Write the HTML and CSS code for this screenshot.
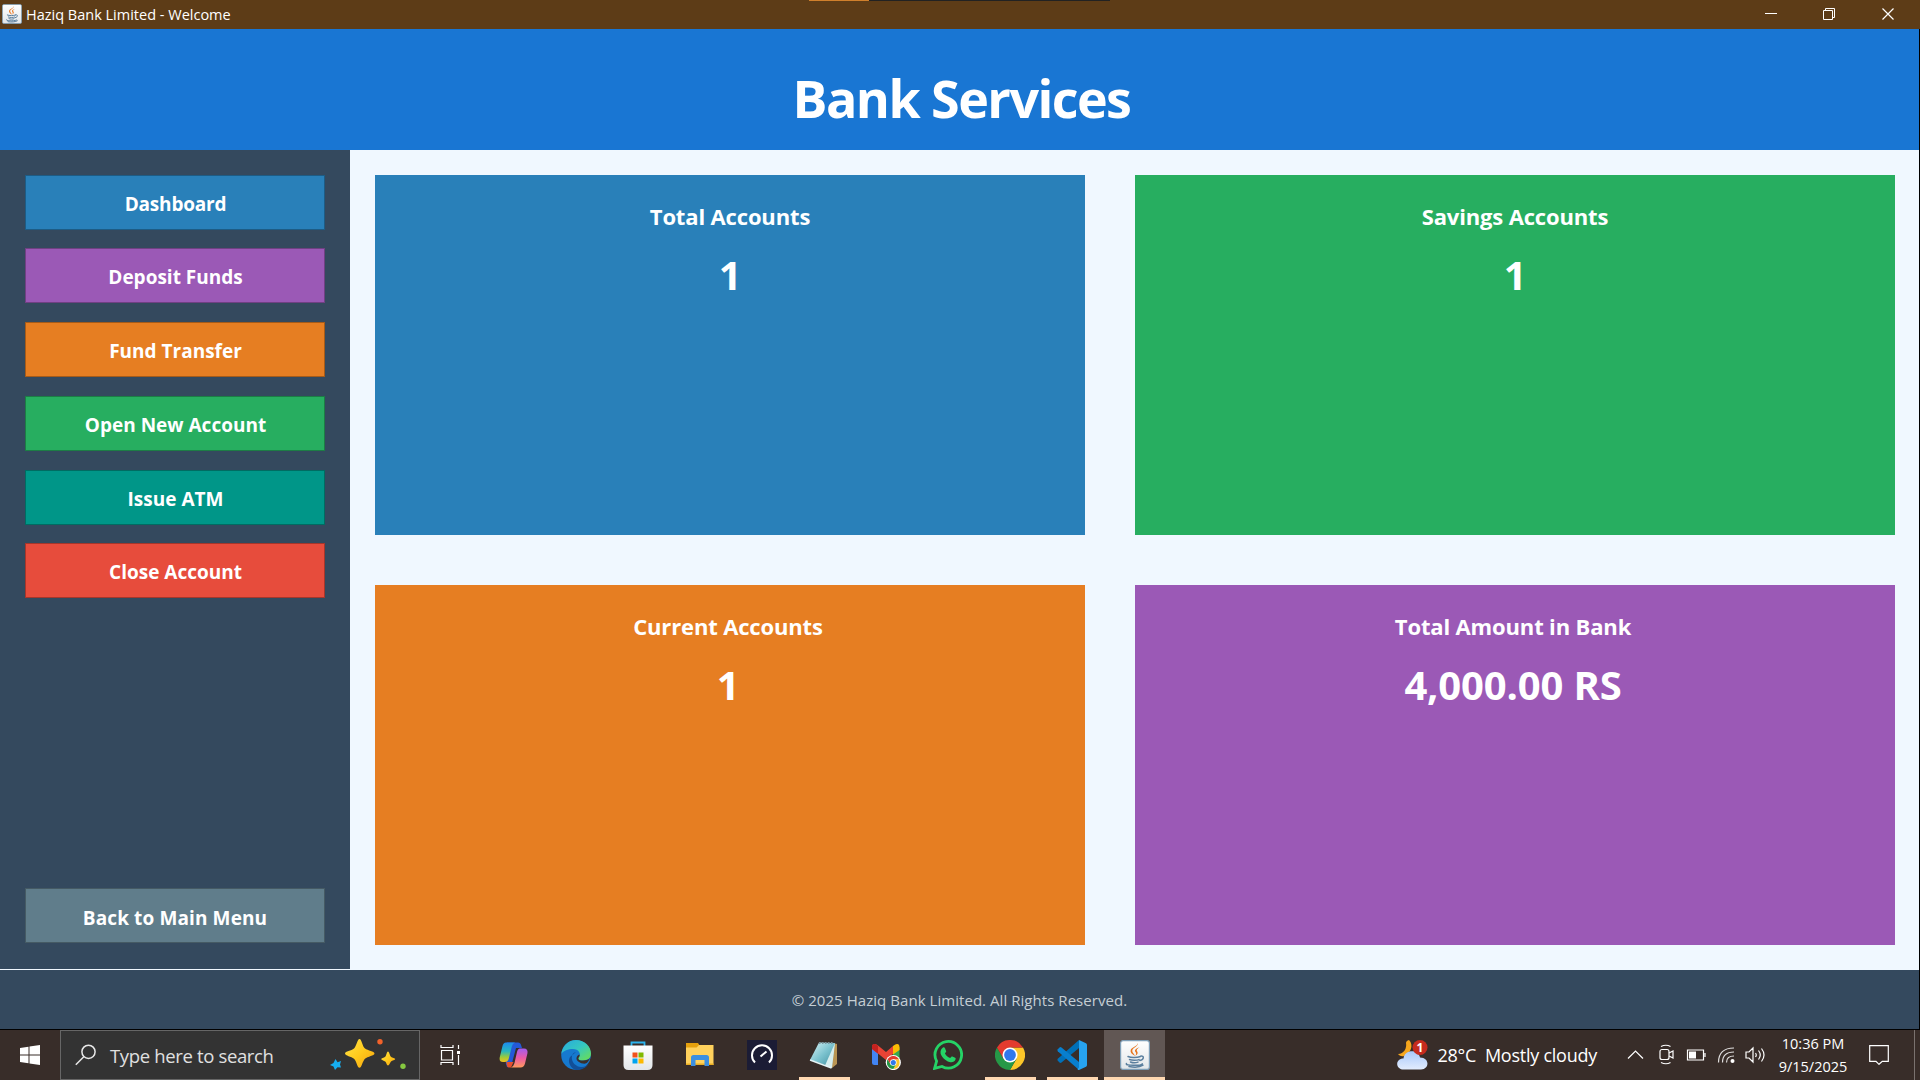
FILE: index.html
```html
<!DOCTYPE html>
<html lang="en">
<head>
<meta charset="utf-8">
<title>Haziq Bank Limited - Welcome</title>
<link rel="stylesheet" href="styles.css">
</head>
<body>
<svg class="defs" width="0" height="0" aria-hidden="true">
  <defs>
    <linearGradient id="tile" x1="0" y1="0" x2="0" y2="1"><stop offset="0" stop-color="#fff"/><stop offset="1" stop-color="#e2e6e9"/></linearGradient>
    <linearGradient id="gold" x1="0" y1="0" x2="1" y2="1"><stop offset="0" stop-color="#ffe34a"/><stop offset=".5" stop-color="#ffca1c"/><stop offset="1" stop-color="#f3a010"/></linearGradient>
    <linearGradient id="copA" x1="0" y1="0" x2="0" y2="1"><stop offset="0" stop-color="#1d8bee"/><stop offset=".45" stop-color="#27b7c0"/><stop offset=".75" stop-color="#9ccb3a"/><stop offset="1" stop-color="#f2c11c"/></linearGradient>
    <linearGradient id="copB" x1="0" y1="0" x2="0" y2="1"><stop offset="0" stop-color="#a25cf0"/><stop offset=".5" stop-color="#ec5aa6"/><stop offset="1" stop-color="#ff9a5c"/></linearGradient>
    <linearGradient id="edgeA" x1="0" y1="0" x2="1" y2="1"><stop offset="0" stop-color="#28a9e0"/><stop offset=".5" stop-color="#35c8c0"/><stop offset="1" stop-color="#6fe04a"/></linearGradient>
    <linearGradient id="cloud" x1="0" y1="0" x2="0" y2="1"><stop offset="0" stop-color="#a9c9fb"/><stop offset="1" stop-color="#e2ecfd"/></linearGradient>
    <linearGradient id="note" x1="0" y1="0" x2="1" y2="1"><stop offset="0" stop-color="#d9f3f6"/><stop offset=".5" stop-color="#7cc3cf"/><stop offset="1" stop-color="#3b8b9b"/></linearGradient>
    <symbol id="java" viewBox="0 0 30 30">
      <rect x=".6" y=".6" width="28.8" height="28.8" rx="2.5" fill="url(#tile)" stroke="#7f9fb8" stroke-width="1.2"/>
      <path d="M17.8 3c.9 3.5-6.200 5-5.500 8.200.2 1.600 2.200 3 2.700 4.800-3.200-1.800-5-3.600-4.300-5.900C11.500 7.200 17.300 6.500 17.800 3z" fill="#e6741e"/>
      <path d="M19.500 7.300c-4 1.300-5.500 3-3.800 5 .8 1.100.5 2.300-.6 3.700 3-1.700 3-3.200 1.900-4.700-.9-1.300.3-2.600 2.500-4z" fill="#e6741e"/>
      <g fill="none" stroke="#5b7f9e" stroke-width="1.500" stroke-linecap="round"><path d="M8 16.500c3 1.300 9 1.200 12.500 0M9.500 19.500c2.500 1 7.500 1 9.500.1M10.500 22c2 .9 5.500.9 7.500.1M20.500 16.200c4-.9 3.700 3.600-.6 4.300M6.500 23.600c-2 2.200 14.500 2.400 15.800.2M9 26.600c5 .8 11.500.4 14-1.400"/></g>
    </symbol>
    <symbol id="chrome" viewBox="0 0 30 30">
      <path d="M15 7.500H28A15 15 0 0 1 15 30L21.500 18.800z" fill="#fcc629"/>
      <path d="M8.500 18.800 2 7.500A15 15 0 0 0 15 30L21.500 18.800z" fill="#269847"/>
      <path d="M15 7.500H28A15 15 0 0 0 2 7.500L8.500 18.800z" fill="#e33b2e"/>
      <circle cx="15" cy="15" r="7.500" fill="#fff"/><circle cx="15" cy="15" r="5.900" fill="#3078ec"/>
    </symbol>
  </defs>
</svg>

<div class="desktop">
  <header class="titlebar">
    <svg class="titlebar-icon" width="20" height="20"><use href="#java"/></svg>
    <span class="titlebar-text">Haziq Bank Limited - Welcome</span>
    <div class="capture-strip"></div>
    <svg class="window-controls" width="174" height="29" fill="none" stroke="#fff"><path d="M19 13.500h12M77.500 10.500h9v9h-9zM79.500 10V8.500h9v9H87"/><path d="m136.500 8.500 11 11m0-11-11 11" stroke-width="1.200"/></svg>
  </header>

  <div class="app">
    <div class="banner"><h1>Bank Services</h1></div>
    <div class="body">
      <nav class="sidebar">
        <button class="nav-button blue first">Dashboard</button>
        <button class="nav-button purple">Deposit Funds</button>
        <button class="nav-button orange">Fund Transfer</button>
        <button class="nav-button green">Open New Account</button>
        <button class="nav-button teal">Issue ATM</button>
        <button class="nav-button red last">Close Account</button>
        <button class="nav-button slate back">Back to Main Menu</button>
      </nav>
      <main class="cards">
        <section class="card blue"><h2>Total Accounts</h2><p>1</p></section>
        <section class="card green"><h2>Savings Accounts</h2><p>1</p></section>
        <section class="card orange lower"><h2>Current Accounts</h2><p>1</p></section>
        <section class="card purple lower"><h2>Total Amount in Bank</h2><p>4,000.00 RS</p></section>
      </main>
    </div>
    <footer class="footer">© 2025 Haziq Bank Limited. All Rights Reserved.</footer>
  </div>

  <div class="taskbar">
    <div class="start"><svg width="20" height="20" fill="#fff"><path d="M0 3l8.500-1.300v7.800H0zM9.500 1.500 20 0v9.500H9.500zM0 10.500h8.500v7.800L0 17zM9.500 10.500H20V20L9.500 18.500z"/></svg></div>
    <div class="search">
      <svg width="22" height="22" fill="none" stroke="#e8e8e8" stroke-width="1.500"><circle cx="13.500" cy="7.800" r="6.600"/><path d="M9 12.500.8 20.700"/></svg>
      <span>Type here to search</span>
      <svg class="sparkles" width="78" height="32">
        <path d="M30.500 0c2.200 0 2.800 7.500 5.500 9.500s9.500 2.800 9.500 5-7 3-9.500 5.300-3.200 9-5.500 9-3-6.800-5.500-9-9-3-9-5.300 6.500-2.800 9-5S28.300 0 30.500 0z" fill="url(#gold)"/>
        <path d="M59 12.500c1.300 0 1.700 4 3 5.200s4.200 1.300 4.200 2.300-3 1.400-4.200 2.600-1.700 4-3 4-1.500-2.900-2.800-4-4-1.500-4-2.600 2.700-1.200 4-2.300 1.500-5.200 2.800-5.200z" fill="url(#gold)"/>
        <path d="m6.500 20 2 3.200L12 22l-1 3.500 1 3-3.500-.2L6 31l-1.500-3.500L1 26l3.500-2z" fill="#16aef0"/>
        <circle cx="51" cy="2.700" r="2.700" fill="#f2622a"/><circle cx="74" cy="27.300" r="2.700" fill="#86c840"/>
      </svg>
    </div>
    <div class="task view"><svg width="21" height="20" fill="none" stroke="#fff" stroke-width="1.200"><path d="M1.500 5.500h11v9.500h-11zM1 0v2.500h12V0M1 20v-2.500h12V20M18.500 0v4M18.500 10v10"/><rect x="17" y="6" width="3" height="3" fill="#fff" stroke="none"/></svg></div>
    <div class="task"><svg width="30" height="30"><path d="M8 2.500h11q2.500 0 3.200 3L23 8h-6l-4 15q-1.500 5-5 4l-1.200-3.500z" fill="#2459d8"/><path d="M7 2.500h9q-2.500.8-3.200 4l-3 12q-.8 3.500-4.300 3.500H4q-4 0-3.300-4.500L3.500 6q.8-3.500 3.500-3.500z" fill="url(#copA)"/><path d="M7.500 22h7L12 27.500H10q-2.500 0-2.500-5.500z" fill="#e6502f"/><path d="M21 8.500h4q4 0 3.500 4.500L26 23.500q-1 4-4.500 4H12q2.500-.8 3.500-4.500l2.500-11q.8-3.500 3-3.500z" fill="url(#copB)"/></svg></div>
    <div class="task"><svg width="30" height="30"><circle cx="15" cy="15" r="14.800" fill="#1679cf"/><path d="M15 12c-7 1.500-5 14 5 15 4 .3 6.500-2 8-4-3 5.500-8 7-13 7-5-1-9-8-6-13z" fill="#124f98"/><path d="M.3 14C1.500 6 7 0 15 0c9 0 15 6.500 15 13.500 0 5-4 7-8.500 7-4 0-5.500-1.200-3.500-3.500 2.500-3.500-.5-8-6-8C7 9 2.500 10.500.3 14z" fill="url(#edgeA)"/><path d="M18 17c-1 1.500-1.300 3.500 4 3.500 2.600 0 5.500-.7 7-2.500-1 3-3 5.300-4.500 5.600-5 .4-9.500-2.600-9-5.600.3-2 1.500-3 3-3.500.3 1 .2 1.800-.5 2.500z" fill="#3a302d"/></svg></div>
    <div class="task"><svg width="30" height="30"><path d="M8.500 8V2.500h13V8" fill="none" stroke="#2cb4ee" stroke-width="1.800"/><path d="M.5 5.500h29V25q0 5-5 5h-19q-5 0-5-5z" fill="url(#tile)"/><path d="M9.500 12.500h5v5h-5z" fill="#f1511b"/><path d="M15.500 12.500h5v5h-5z" fill="#80b900"/><path d="M9.500 18.500h5v5h-5z" fill="#00a4ef"/><path d="M15.500 18.500h5v5h-5z" fill="#fdb900"/></svg></div>
    <div class="task"><svg width="30" height="30"><path d="M1 3h12l2 3-2 3H1z" fill="#e5a00d"/><path d="M1 7.500h10.500L14 5h14.500v20H1z" fill="#ffd15c"/><path d="M1 23.500h27.500V25H1z" fill="#e8ad22"/><path d="M6 26V17.500Q6 15 8.500 15H21.500Q24 15 24 17.500V26h-4.500v-6h-9v6z" fill="#3b8fe0"/></svg></div>
    <div class="task"><svg width="30" height="30"><rect width="30" height="30" fill="#1b1c35"/><path d="M8 22.500a10 10 0 1 1 14 0M13.500 16.500l6-5" fill="none" stroke="#fff" stroke-width="2"/></svg></div>
    <div class="task open"><svg width="30" height="30"><path d="M24 3l4 1v20l-5 4z" fill="#b99452"/><path d="M10 2.500 26 3l-3.500 24L1 20z" fill="url(#note)"/><path d="M26 3 23 28l-7-2.500z" fill="#d7eeee"/><path d="M1 20 22.500 28" stroke="#e5f4f6" stroke-width="1.500"/><path d="M10 3h15" stroke="#7a959d" stroke-width="2" stroke-dasharray="1.500 1.500"/></svg></div>
    <div class="task"><svg width="30" height="30"><path d="M1 7v15.500Q1 25 3.500 25H7V11z" fill="#4285f4"/><path d="M22 11v14h4q2.500 0 2.500-2.500V7z" fill="#34a853"/><path d="M1 7Q1 4 4 4q1.500 0 3 1.500L15 12l7-6v8l-7 6-8-6.500-6-4.500z" fill="#ea4335"/><path d="M1 9V6.500Q1 4 3.500 4.100 5 4 7 5.700v8z" fill="#c5221f"/><path d="M22 6q3-2.500 4.500-2 2 .2 2 3v3L22 14.500z" fill="#fbbc04"/><circle cx="22.300" cy="22.500" r="7.600" fill="#fff"/><svg x="15.800" y="16" width="13" height="13"><use href="#chrome"/></svg></svg></div>
    <div class="task"><svg width="30" height="30"><path d="M1.600 28.400l2-7.300A13.300 13.300 0 1 1 9 26.500z" fill="none" stroke="#25d366" stroke-width="2.800"/><path d="M10 7.500c.8-.3 1.600-.2 2 .7l1.100 2.700c.3.700-.1 1.300-1.200 2.300 1.200 2.400 2.900 3.900 5.200 4.900 1.200-1.600 1.600-1.900 2.300-1.600l2.700 1.300c.7.400.7.700.4 1.800-.8 2.200-3.400 3.200-6 2.400-4.500-1.400-8-5-8.900-8.500-.4-2.600.8-5.200 2.400-6z" fill="#25d366"/></svg></div>
    <div class="task open"><svg width="30" height="30"><use href="#chrome"/></svg></div>
    <div class="task open"><svg width="30" height="30"><path d="M22 0v8L4.500 22.500q-1 .8-2 0L.8 20.800q-.8-1 0-2z" fill="#0070b8"/><path d="M22 30v-8L4.500 7.500q-1-.8-2 0L.8 9.200q-.8 1 0 2z" fill="#087fce"/><path d="M22 0l7 3.200q1 .5 1 1.800v20q0 1.300-1 1.800L22 30q-1 .2-1.500-1l1.500-1.500z" fill="#27a3f0"/></svg></div>
    <div class="task open active"><svg width="30" height="30"><use href="#java"/></svg></div>

    <div class="tray">
      <svg class="weather-icon" width="31" height="30"><path d="M12 0c5 5 2 13-5 16-3 1-5-1-6-2 6 0 9-6 8-11 0-1.500 1-2.500 3-3z" fill="#f6a61c"/><path d="M7 29.500c-9 0-9-11-.5-11 1-9.500 15-9.500 16.500-1 10 0 9.500 12 1 12z" fill="url(#cloud)"/><circle cx="23" cy="7.500" r="7.500" fill="#c52b1e"/><text class="badge" x="23" y="12" text-anchor="middle">1</text></svg>
      <span class="weather">28°C&nbsp; Mostly cloudy</span>
      <svg class="tray-icons" width="140" height="22" fill="none" stroke="#fff" stroke-width="1.200">
        <path d="m1 14.500 7.500-7.500 7.500 7.500"/>
        <rect x="33" y="5.500" width="9" height="10" rx="2"/><path d="M42 9l4-2v7l-4-2M34 2.500q5-2.500 9.500 0M34 18.500q5 2.500 9.500 0"/>
        <path d="M60.500 6h16v10h-16zM78 9v4"/><path d="M62 7.500h7v7h-7z" fill="#fff" stroke="none"/>
        <path d="M91.500 18.500Q91.500 4 107 4M95.500 18.500Q95.500 8 107 8M99.500 18.500q0-6.500 7.500-6.500" opacity=".85"/><circle cx="105.500" cy="17" r="2" fill="#fff" stroke="none"/>
        <path d="M119 8h3l4-4v14l-4-4h-3zM128.500 9q1.500 2 0 4M131.500 6.500q3.500 4.500 0 9M134.500 4.500q5 6.500 0 13"/>
      </svg>
      <div class="clock"><span>10:36 PM</span><span>9/15/2025</span></div>
      <svg class="notify" width="20" height="20" fill="none" stroke="#fff" stroke-width="1.200"><path d="M.7.700h18.600v15.600h-6L10 19.300 7 16.300H.7z"/></svg>
      <div class="peek"></div>
    </div>
  </div>
</div>
</body>
</html>
```
FILE: styles.css
```css
* { box-sizing: border-box; }
body { margin: 0; font-family: "Open Sans", "Noto Sans", sans-serif; color: #fff; overflow: hidden; }
h1, h2, p { margin: 0; }
svg { display: block; flex: none; }
.defs { position: absolute; }

.desktop { width: 1920px; height: 1080px; display: flex; flex-direction: column; background: #000; }

.titlebar { position: relative; height: 29px; display: flex; align-items: center; background: #5d3c17; padding-left: 2px; }
.titlebar-icon { margin-top: -2px; }
.titlebar-text { margin-left: 4px; font-size: 14.500px; white-space: nowrap; }
.window-controls { margin-left: auto; }
.capture-strip { position: absolute; left: 809px; top: 0; width: 301px; height: 1px; background: linear-gradient(90deg, #d0802c 60px, #222 60px); }

.app { height: 1001px; padding: 0 1px 1px 0; display: flex; flex-direction: column; }
.banner { height: 121px; display: flex; align-items: center; justify-content: center; background: #1976d3; padding: 16px 0 0 4px; }
.banner h1 { font-size: 52px; line-height: 60px; letter-spacing: -1.550px; white-space: nowrap; }
.body { height: 820px; display: flex; background: #f0f8ff; padding-bottom: 1px; }

.sidebar { width: 350px; display: flex; flex-direction: column; align-items: center; gap: 19px; padding: 25px 25px 26px; background: #34495e; }
.nav-button { width: 300px; height: 55px; flex: none; border: 1px solid rgba(0, 0, 0, .28); padding: 3px 0 0 1px; color: #fff; font: 700 19px/24px "Open Sans", sans-serif; }
.first { margin-bottom: -1px; letter-spacing: -.2px; }
.last { margin-top: -1px; }
.back { margin-top: auto; padding: 4px 0 0; letter-spacing: .12px; }
.blue { background-color: #2980b9; }
.purple { background-color: #9b59b6; }
.orange { background-color: #e67e22; }
.green { background-color: #27ae60; }
.teal { background-color: #009688; }
.red { background-color: #e74c3c; }
.slate { background-color: #607d8b; }

.cards { flex: 1; display: grid; grid-template-columns: 710px 760px; grid-template-rows: 360px 360px; gap: 50px; padding: 25px; }
.card { display: flex; flex-direction: column; align-items: center; padding-top: 26px; }
.lower { padding-right: 4px; }
.card h2 { font-size: 22px; line-height: 30px; letter-spacing: -.150px; white-space: nowrap; }
.card p { margin-top: 21px; font-size: 40px; font-weight: 700; line-height: 46px; letter-spacing: -.150px; white-space: nowrap; }

.footer { height: 59px; display: flex; align-items: center; justify-content: center; background: #34495e; color: #c5ced4; font-size: 15px; letter-spacing: .050px; }

.taskbar { height: 50px; display: flex; background: #382d29; }
.start { width: 60px; display: flex; align-items: center; justify-content: center; }
.search { width: 360px; display: flex; align-items: center; padding: 0 12px 0 14px; background: #333; border: 1px solid #666; color: #e0e0e0; font-size: 18.500px; letter-spacing: -.350px; }
.search span { margin: 0 auto 0 13px; white-space: nowrap; }
.task { width: 62px; height: 50px; display: flex; align-items: center; justify-content: center; }
.view { width: 63px; padding-right: 3px; }
.open { background: linear-gradient(#ffd8b1, #ffd8b1) center bottom / 51px 3px no-repeat; }
.active { width: 61px; margin-left: 1px; background-color: #615754; background-size: 61px 3px; }
.tray { margin-left: auto; display: flex; align-items: center; }
.weather { margin-left: 9px; font-size: 18px; letter-spacing: -.250px; white-space: nowrap; }
.badge { font: 700 12px "Open Sans", sans-serif; fill: #fff; }
.tray-icons { margin-left: 30px; }
.clock { width: 70px; margin-left: 11px; display: flex; flex-direction: column; align-items: center; font-size: 14.500px; line-height: 23px; white-space: nowrap; }
.notify { margin-left: 21px; margin-right: 25px; }
.peek { width: 6px; height: 50px; border-left: 1px solid #7a726f; }
```
